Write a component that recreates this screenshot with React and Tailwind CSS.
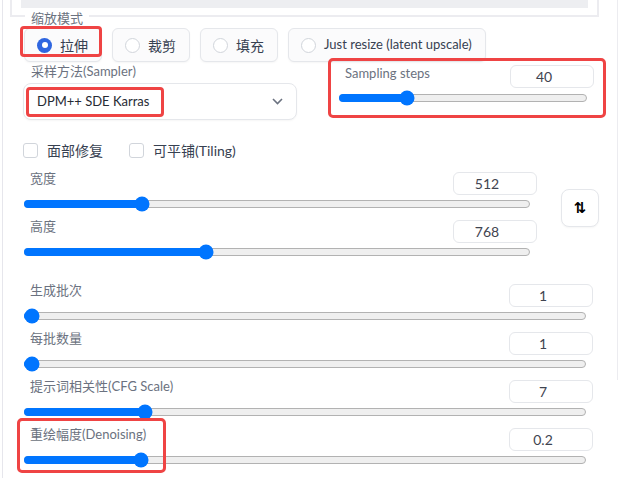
import React from "react";

const font = "font-['Lato','Noto_Sans_CJK_SC',sans-serif]";

function Track({ frac, className = "" }) {
  return (
    <div className={`relative h-[8px] mr-[7px] rounded-full bg-[#efefef] border border-[#b2b2b2] ${className}`}>
      <div
        className="absolute left-[-1px] top-[-1px] bottom-[-1px] rounded-full bg-[#0075ff]"
        style={{ width: `calc(${frac} * (100% - 13px) + 7.5px)` }}
      />
      <div
        className="absolute top-1/2 -translate-y-1/2 -translate-x-1/2 w-[15px] h-[15px] rounded-full bg-[#0075ff]"
        style={{ left: `calc(${frac} * (100% - 13px) + 6.5px)` }}
      />
    </div>
  );
}

function NumBox({ value }) {
  return (
    <div className="w-[84px] h-[23px] rounded-[6px] border border-[#e5e7eb] bg-white flex items-center justify-center pr-[16px] text-[14px] text-[#3f4450]">
      {value}
    </div>
  );
}

function Slider({ label, value, frac, className = "" }) {
  return (
    <div className={`flex flex-col ${className}`}>
      <div className="flex items-start justify-between">
        <span className="ml-[6px] -mt-[3px] text-[13px] leading-[18px] text-[#6b7280]">{label}</span>
        <NumBox value={value} />
      </div>
      <Track frac={frac} className="mt-[5px]" />
    </div>
  );
}

function Radio({ label, checked, small }) {
  return (
    <div className="h-[34px] flex items-center pl-[12px] pr-[13px] rounded-[6px] border border-[#e5e7eb] bg-[#fbfbfc] shadow-[0_1px_2px_rgba(0,0,0,0.04)]">
      {checked ? (
        <span className="w-[15px] h-[15px] rounded-full bg-[#2f66e0] flex items-center justify-center">
          <span className="w-[6px] h-[6px] rounded-full bg-white" />
        </span>
      ) : (
        <span className="w-[15px] h-[15px] rounded-full border border-[#d1d5db] bg-white" />
      )}
      <span className={`ml-[8px] text-[#374151] whitespace-nowrap ${small ? "text-[13px]" : "text-[14px]"}`}>{label}</span>
    </div>
  );
}

function Check({ label }) {
  return (
    <div className="flex items-center h-[15px]">
      <span className="w-[15px] h-[15px] rounded-[3px] border border-[#d1d5db] bg-white" />
      <span className="ml-[9px] text-[14px] leading-[15px] text-[#374151]">{label}</span>
    </div>
  );
}

export default function App() {
  return (
    <div className={`relative w-[618px] h-[478px] overflow-hidden bg-white flex ${font}`}>
      <div className="ml-[2px] w-[615px] border-l border-[#e6e6ec] flex flex-col pl-[21px]">
        {/* image box remnant */}
        <div className="-ml-[14px] w-[589px] h-[17px] border-2 border-t-0 border-[#ececf0] px-[9px] pb-[7px]">
          <div className="h-full bg-[#edeef1]" />
        </div>

        <span className="relative self-start -mt-[8px] ml-[1px] px-[6px] bg-white text-[13px] leading-[18px] text-[#6b7280]">
          缩放模式
        </span>

        <div className="mt-[1px] flex gap-[10px]">
          <Radio label="拉伸" checked />
          <Radio label="裁剪" />
          <Radio label="填充" />
          <Radio label="Just resize (latent upscale)" small />
        </div>

        <div className="flex">
          <div className="w-[274px] -ml-[1px] flex flex-col">
            <span className="ml-[8px] text-[13px] leading-[18px] text-[#6b7280]">采样方法(Sampler)</span>
            <div className="mt-[3px] h-[37px] rounded-[8px] border border-[#e5e7eb] bg-white flex items-center justify-between pl-[13px] pr-[13px] shadow-[0_1px_2px_rgba(0,0,0,0.04)]">
              <span className="text-[13px] text-[#262a33]">DPM++ SDE Karras</span>
              <svg width="11" height="7" viewBox="0 0 11 7" fill="none">
                <path d="M1 1l4.5 4.5L10 1" stroke="#6b7280" strokeWidth="1.6" />
              </svg>
            </div>
          </div>
          <div className="ml-[42px] w-[255px] flex flex-col">
            <div className="mt-[3px] flex items-start justify-between">
              <span className="ml-[6px] -mt-[1px] text-[13px] leading-[18px] text-[#6b7280]">Sampling steps</span>
              <NumBox value="40" />
            </div>
            <Track frac={39 / 149} className="mt-[6px]" />
          </div>
        </div>

        <div className="mt-[23px] flex gap-[26px] -ml-[1px]">
          <Check label="面部修复" />
          <Check label="可平铺(Tiling)" />
        </div>

        <div className="mt-[14px] flex">
          <div className="w-[513px] flex flex-col">
            <Slider label="宽度" value="512" frac={448 / 1984} />
            <Slider label="高度" value="768" frac={704 / 1984} className="mt-[12px]" />
          </div>
          <div className="ml-[24px] mt-[17px] w-[38px] h-[38px] rounded-[8px] border border-[#e5e7eb] bg-white flex items-center justify-center shadow-[0_1px_2px_rgba(0,0,0,0.04)]">
            <span className="font-['DejaVu_Sans',sans-serif] text-[15px] font-bold text-black leading-none">⇅</span>
          </div>
        </div>

        <div className="w-[569px] flex flex-col">
          <Slider label="生成批次" value="1" frac={0} className="mt-[28px]" />
          <Slider label="每批数量" value="1" frac={0} className="mt-[12px]" />
          <Slider label="提示词相关性(CFG Scale)" value="7" frac={6 / 29} className="mt-[12px]" />
          <Slider label="重绘幅度(Denoising)" value="0.2" frac={0.2} className="mt-[12px]" />
        </div>
      </div>
      <div className="w-[1px] h-[380px] bg-[#ececf0]" />

      {/* red annotation boxes */}
      <div className="absolute left-[20px] top-[26px] w-[82px] h-[31px] border-[3px] border-[#ef4444] rounded-[4px]" />
      <div className="absolute left-[26px] top-[87px] w-[138px] h-[30px] border-[3px] border-[#ef4444] rounded-[4px]" />
      <div className="absolute left-[328px] top-[58px] w-[278px] h-[60px] border-[3px] border-[#ef4444] rounded-[5px]" />
      <div className="absolute left-[17px] top-[418px] w-[149px] h-[55px] border-[3px] border-[#ef4444] rounded-[5px]" />
    </div>
  );
}
